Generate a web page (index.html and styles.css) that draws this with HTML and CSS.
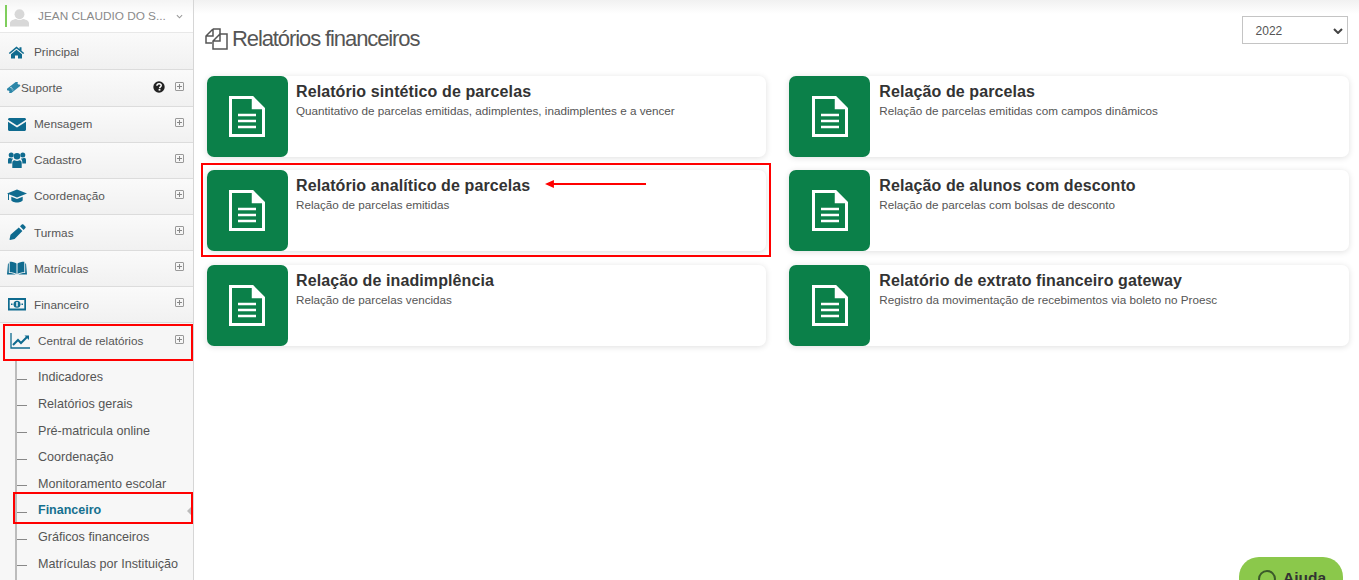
FILE: index.html
```html
<!DOCTYPE html>
<html lang="pt-BR">
<head>
<meta charset="utf-8">
<title>Relatórios financeiros</title>
<link rel="stylesheet" href="styles.css">
</head>
<body>
<div class="app">
  <aside class="sidebar">
    <div class="user">
      <span class="user-bar"></span>
      <svg class="avatar" viewBox="0 0 20 20"><circle cx="10" cy="6.600" r="5.200"/><path d="M0 19.500v-3.200c0-2.600 2.400-3.700 6.300-4.600 2.300 1.300 5.100 1.300 7.400 0 3.900.9 6.300 2 6.300 4.600v3.200z"/></svg>
      <span class="user-name">JEAN CLAUDIO DO S...</span>
      <svg class="caret" viewBox="0 0 8 5"><path d="M1 1l3 3 3-3"/></svg>
    </div>
    <nav class="menu">
      <a class="item"><svg class="ico" viewBox="0 0 20 16"><path d="M9.500 3.500L1.800 10l1 1.100 6.700-5.600 6.700 5.600 1-1.100-2.700-2.300V4.200h-2v1.800z"/><path d="M4 11.300l5.500-4.600 5.500 4.600v4.200h-4v-3H8v3H4z"/></svg><span class="label label-low">Principal</span></a>
      <a class="item item-short"><svg class="ico-small" viewBox="0 0 14 11"><g transform="rotate(-38 6.500 5.500)"><path d="M0 2.500h13v2a1 1 0 000 2v2H0v-2a1 1 0 000-2z"/><path d="M4.500 3.500v4" stroke="#fff" stroke-width="1" stroke-dasharray="1 .7"/></g></svg><span class="label">Suporte</span><svg class="help" viewBox="0 0 12 12"><circle cx="6" cy="6" r="5.700"/><path d="M3.900 4.700C4 3.400 4.900 2.700 6.100 2.700c1.300 0 2.100.7 2.100 1.800 0 1.400-1.600 1.400-1.600 2.700" fill="none" stroke="#fff" stroke-width="1.500"/><rect x="5.600" y="8" width="1.800" height="1.600" fill="#fff"/></svg><span class="plus"></span></a>
      <a class="item"><svg class="ico" viewBox="0 0 20 16"><path d="M1 3.500C1 2.700 1.700 2 2.500 2h15c.8 0 1.500.7 1.500 1.500v.2L10 9.500 1 3.700z"/><path d="M1 5.700l9 5.800 9-5.800v7.800c0 .8-.7 1.500-1.500 1.500h-15c-.8 0-1.500-.7-1.500-1.500z"/></svg><span class="label">Mensagem</span><span class="plus"></span></a>
      <a class="item"><svg class="ico" viewBox="0 0 20 16"><circle cx="10" cy="4.300" r="3.300"/><circle cx="4.200" cy="3" r="2.500"/><circle cx="15.800" cy="3" r="2.500"/><path d="M5.300 16v-5.200c0-1.600 1-2.600 2.200-2.600 1.600 1.100 3.400 1.100 5 0 1.200 0 2.200 1 2.200 2.600V16z"/><path d="M1 11.500V8c0-1.300.8-2.200 2-2.200 1 .8 2 1 3.200.6-.8.900-1.500 2-1.500 3.500v1.600zM19 11.500V8c0-1.300-.8-2.200-2-2.200-1 .8-2 1-3.200.6.800.9 1.500 2 1.500 3.500v1.600z"/></svg><span class="label">Cadastro</span><span class="plus"></span></a>
      <a class="item"><svg class="ico" viewBox="0 0 20 16"><path d="M10 1.500L0 5.500l10 4 10-4z"/><path d="M4.300 8.800v3.200c0 1.300 2.600 2.500 5.700 2.500s5.700-1.200 5.700-2.500V8.800L10 11z"/><rect x="1" y="6" width="1" height="6"/></svg><span class="label">Coordenação</span><span class="plus"></span></a>
      <a class="item"><svg class="ico" viewBox="0 0 20 16"><path d="M14.800.5c.5-.4 1.100-.4 1.600 0l2 2c.5.5.5 1.100 0 1.600L16.600 6 13 2.300zM11.800 3.500l3.600 3.600-7.800 7.800-4.600 1-.5-.5 1-4.600z"/></svg><span class="label label-low">Turmas</span><span class="plus"></span></a>
      <a class="item"><svg class="ico" viewBox="0 0 20 16"><path d="M9.500 3.500C8 2.200 5.500 1.700 2.700 1.700v10.500c2.600 0 5.300.5 6.800 1.800zM10.500 3.500c1.500-1.300 4-1.800 6.800-1.800v10.500c-2.600 0-5.300.5-6.800 1.800z"/><path d="M1.800 3.500H1L0 14.500h8.500l1 .5h1l1-.5H20l-1-11h-.8v9.500c-3 0-5.700.5-7.200 2h-2c-1.500-1.500-4.200-2-7.200-2z"/></svg><span class="label label-low">Matrículas</span><span class="plus"></span></a>
      <a class="item"><svg class="ico" viewBox="0 0 20 16"><path fill-rule="evenodd" d="M1 2h18v12.500H1zM2.700 4v8.500h14.600V4z"/><circle cx="10" cy="8.200" r="3.500"/><rect x="9.300" y="6" width="1.400" height="4.400" fill="#fff"/><rect x="4" y="7.500" width="1.500" height="1.500"/><rect x="14.500" y="7.500" width="1.500" height="1.500"/></svg><span class="label label-low">Financeiro</span><span class="plus"></span></a>
      <a class="item item-open"><svg class="ico-chart" viewBox="0 0 20 16"><path d="M1 0v15h19" fill="none" stroke="#0f6b8f" stroke-width="1.300"/><path d="M3 12l5-5 3 3 6-6" fill="none" stroke="#0f6b8f" stroke-width="2"/><path d="M14.500 2.500H19V7z" fill="#0f6b8f"/></svg><span class="label">Central de relatórios</span><span class="plus"></span></a>
      <ul class="sub">
        <li class="sub-item"><span class="tick"></span>Indicadores</li>
        <li class="sub-item"><span class="tick"></span>Relatórios gerais</li>
        <li class="sub-item"><span class="tick"></span>Pré-matricula online</li>
        <li class="sub-item"><span class="tick"></span>Coordenação</li>
        <li class="sub-item"><span class="tick"></span>Monitoramento escolar</li>
        <li class="sub-item sub-active"><span class="tick"></span>Financeiro<span class="pointer"></span></li>
        <li class="sub-item"><span class="tick"></span>Gráficos financeiros</li>
        <li class="sub-item"><span class="tick"></span>Matrículas por Instituição</li>
      </ul>
    </nav>
  </aside>
  <main class="main">
    <header class="head">
      <h1 class="title"><svg class="title-ico" viewBox="0 0 23 22"><path d="M8 1h7v5M8 1L1 8v7h6M8 1v7H1"/><path d="M15 6h7v15H8V13l7-7zM15 6v7H8"/></svg>Relatórios financeiros</h1>
      <div class="select">2022<svg class="select-caret" viewBox="0 0 10 6"><path d="M1 1l4 4 4-4"/></svg></div>
    </header>
    <section class="grid">
      <a class="card"><span class="card-ico"><svg class="doc" viewBox="0 0 36 41"><path d="M1.500 1.500h22l11 11v27h-33z"/><path d="M23.500 1.500v11h11z" class="fold"/><path d="M9 19h18M9 25h18M9 31h18" class="lines"/></svg></span><span class="card-body"><b class="card-title">Relatório sintético de parcelas</b><span class="card-desc">Quantitativo de parcelas emitidas, adimplentes, inadimplentes e a vencer</span></span></a>
      <a class="card"><span class="card-ico"><svg class="doc" viewBox="0 0 36 41"><path d="M1.500 1.500h22l11 11v27h-33z"/><path d="M23.500 1.500v11h11z" class="fold"/><path d="M9 19h18M9 25h18M9 31h18" class="lines"/></svg></span><span class="card-body"><b class="card-title">Relação de parcelas</b><span class="card-desc">Relação de parcelas emitidas com campos dinâmicos</span></span></a>
      <a class="card"><span class="card-ico"><svg class="doc" viewBox="0 0 36 41"><path d="M1.500 1.500h22l11 11v27h-33z"/><path d="M23.500 1.500v11h11z" class="fold"/><path d="M9 19h18M9 25h18M9 31h18" class="lines"/></svg></span><span class="card-body"><b class="card-title">Relatório analítico de parcelas</b><span class="card-desc">Relação de parcelas emitidas</span></span></a>
      <a class="card"><span class="card-ico"><svg class="doc" viewBox="0 0 36 41"><path d="M1.500 1.500h22l11 11v27h-33z"/><path d="M23.500 1.500v11h11z" class="fold"/><path d="M9 19h18M9 25h18M9 31h18" class="lines"/></svg></span><span class="card-body"><b class="card-title">Relação de alunos com desconto</b><span class="card-desc">Relação de parcelas com bolsas de desconto</span></span></a>
      <a class="card"><span class="card-ico"><svg class="doc" viewBox="0 0 36 41"><path d="M1.500 1.500h22l11 11v27h-33z"/><path d="M23.500 1.500v11h11z" class="fold"/><path d="M9 19h18M9 25h18M9 31h18" class="lines"/></svg></span><span class="card-body"><b class="card-title">Relação de inadimplência</b><span class="card-desc">Relação de parcelas vencidas</span></span></a>
      <a class="card"><span class="card-ico"><svg class="doc" viewBox="0 0 36 41"><path d="M1.500 1.500h22l11 11v27h-33z"/><path d="M23.500 1.500v11h11z" class="fold"/><path d="M9 19h18M9 25h18M9 31h18" class="lines"/></svg></span><span class="card-body"><b class="card-title">Relatório de extrato financeiro gateway</b><span class="card-desc">Registro da movimentação de recebimentos via boleto no Proesc</span></span></a>
    </section>
  </main>
</div>
<div class="mark mark-central"></div>
<div class="mark mark-fin"></div>
<div class="mark mark-card"></div>
<svg class="arrow" viewBox="0 0 104 8"><path d="M0 4l9-4v3h93v2H9v3z"/></svg>
<div class="help-btn"><svg class="help-ico" viewBox="0 0 20 20"><circle cx="10" cy="10" r="8"/></svg>Ajuda</div>
</body>
</html>
```
FILE: styles.css
```css
* { box-sizing: border-box; }
html, body { margin: 0; height: 100%; overflow: hidden; background: #fff; }
body { font-family: "Liberation Sans", Arial, sans-serif; font-size: 12px; color: #555; }
ul { list-style: none; margin: 0; padding: 0; }

.app { display: flex; height: 580px; }

.sidebar { width: 194px; flex: none; height: 580px; overflow: hidden; background: #f7f7f7; border-right: 1px solid #d6d6d6; }
.user { height: 33px; display: flex; align-items: center; padding-left: 5px; background: linear-gradient(#f4f4f4, #fff 45%); border-bottom: 1px solid #e8e8e8; }
.user-bar { width: 2px; height: 22px; background: #7fce5c; }
.avatar { width: 19px; height: 19px; margin: 2px 0 0 3px; fill: #d8d8d8; }
.user-name { margin-left: 9px; color: #8a8a8a; font-size: 11.800px; white-space: nowrap; width: 141px; }
.caret { width: 7px; height: 5px; margin-left: -3px; fill: none; stroke: #999; stroke-width: 1.200; }

.item { height: 36px; display: flex; align-items: center; padding: 0 8px 1px 7px; background: linear-gradient(#fafafa, #f1f1f1); border-bottom: 1px solid #dcdcdc; color: #555; font-size: 11.800px; }
.item:first-child { height: 37px; }
.item-short { height: 37px; }
.ico { width: 20px; height: 16px; flex: none; fill: #0f6b8f; }
.ico-small { width: 14px; height: 11px; flex: none; fill: #2c86a8; }
.ico-chart { width: 20px; height: 16px; flex: none; margin-left: 3px; }
.label { margin-left: 7px; flex: 1; }
.label-low { padding-top: 2px; }
.item-short .label { margin-left: 0; }
.item-open { background: #f6f6f6; border-bottom: 0; height: 37px; font-size: 11.700px; padding-bottom: 2px; }
.item-open .label { margin-left: 8px; }
.help { width: 12px; height: 12px; fill: #222; margin: -2px 10px 0 0; }
.plus { width: 9px; height: 9px; flex: none; margin: -3px 1px 0 0; border: 1px solid #999; border-radius: 1px; background: linear-gradient(#888, #888) center / 5px 1px no-repeat, linear-gradient(#888, #888) center / 1px 5px no-repeat; }

.sub { margin-left: 15px; border-left: 2px solid #bcbcbc; padding-top: 3.800px; height: 230px; font-size: 12.600px; }
.sub-item { height: 26.700px; display: flex; align-items: center; color: #555; white-space: nowrap; position: relative; }
.tick { width: 10px; height: 1px; margin: 4px 11px 0 0; background: #888; flex: none; }
.sub-active { color: #15708f; font-weight: bold; font-size: 12.500px; padding-bottom: 1px; }
.pointer { position: absolute; right: 1px; top: 9px; border: 5px solid transparent; border-right: 5px solid #bbb; border-left: 0; }

.main { flex: 1; min-width: 0; padding: 0 0 0 12.600px; background: linear-gradient(#f1f1f1, #fff 14px) top / 100% 20px no-repeat; }
.head { height: 76px; width: 1141px; display: flex; justify-content: space-between; align-items: flex-start; }
.title { margin: 27px 0 0 -1.600px; display: flex; align-items: center; font-size: 22px; line-height: 24px; font-weight: normal; color: #555; letter-spacing: -1.100px; }
.title-ico { width: 23px; height: 22px; margin-right: 4px; fill: none; stroke: #555; stroke-width: 1.500; }
.select { width: 106px; height: 28px; margin: 16px 0 0 0; border: 1px solid #c4c4c4; padding: 1px 0 0 13px; display: flex; align-items: center; justify-content: space-between; color: #555; font-size: 12px; background: #fff; }
.select-caret { width: 10px; height: 6px; margin-right: 4px; fill: none; stroke: #444; stroke-width: 2; }

.grid { display: grid; grid-template-columns: 559.500px 559.500px; column-gap: 23.400px; row-gap: 13.400px; }
.card { height: 81px; display: flex; background: #fff; border-radius: 7px; box-shadow: 0 1px 6px rgba(0,0,0,.13); }
.card-ico { width: 81px; height: 81px; flex: none; background: #0b8049; border-radius: 7px; display: flex; align-items: center; justify-content: center; }
.doc { width: 36px; height: 41px; fill: none; stroke: #fff; stroke-width: 3; }
.doc .fold { fill: #fff; stroke-width: 1.500; }
.doc .lines { stroke-width: 2.500; }
.card-body { display: flex; flex-direction: column; padding: 7px 0 0 8.400px; }
.card:nth-child(even) .card-body { padding-left: 8.800px; }
.card-title { font-size: 16px; line-height: 18px; color: #333; letter-spacing: .1px; }
.card-desc { font-size: 11.700px; line-height: 16px; color: #555; margin-top: 2px; }

.mark { position: absolute; border: 2px solid #f00; pointer-events: none; }
.mark-central { left: 3px; top: 324px; width: 190px; height: 37px; }
.mark-fin { left: 13px; top: 492px; width: 180px; height: 32px; }
.mark-card { left: 201px; top: 163px; width: 570px; height: 94px; }
.arrow { position: absolute; left: 545px; top: 180px; width: 103px; height: 8px; fill: #f00; }

.help-btn { position: absolute; left: 1238.500px; top: 557px; width: 104.500px; height: 50px; border-radius: 20px; background: #8bc84b; color: #333; font-size: 15.500px; font-weight: bold; display: flex; align-items: flex-start; padding: 12px 0 0 18.500px; gap: 6px; }
.help-ico { width: 20px; height: 20px; fill: none; stroke: #3b5a2a; stroke-width: 2; flex: none; }
```
